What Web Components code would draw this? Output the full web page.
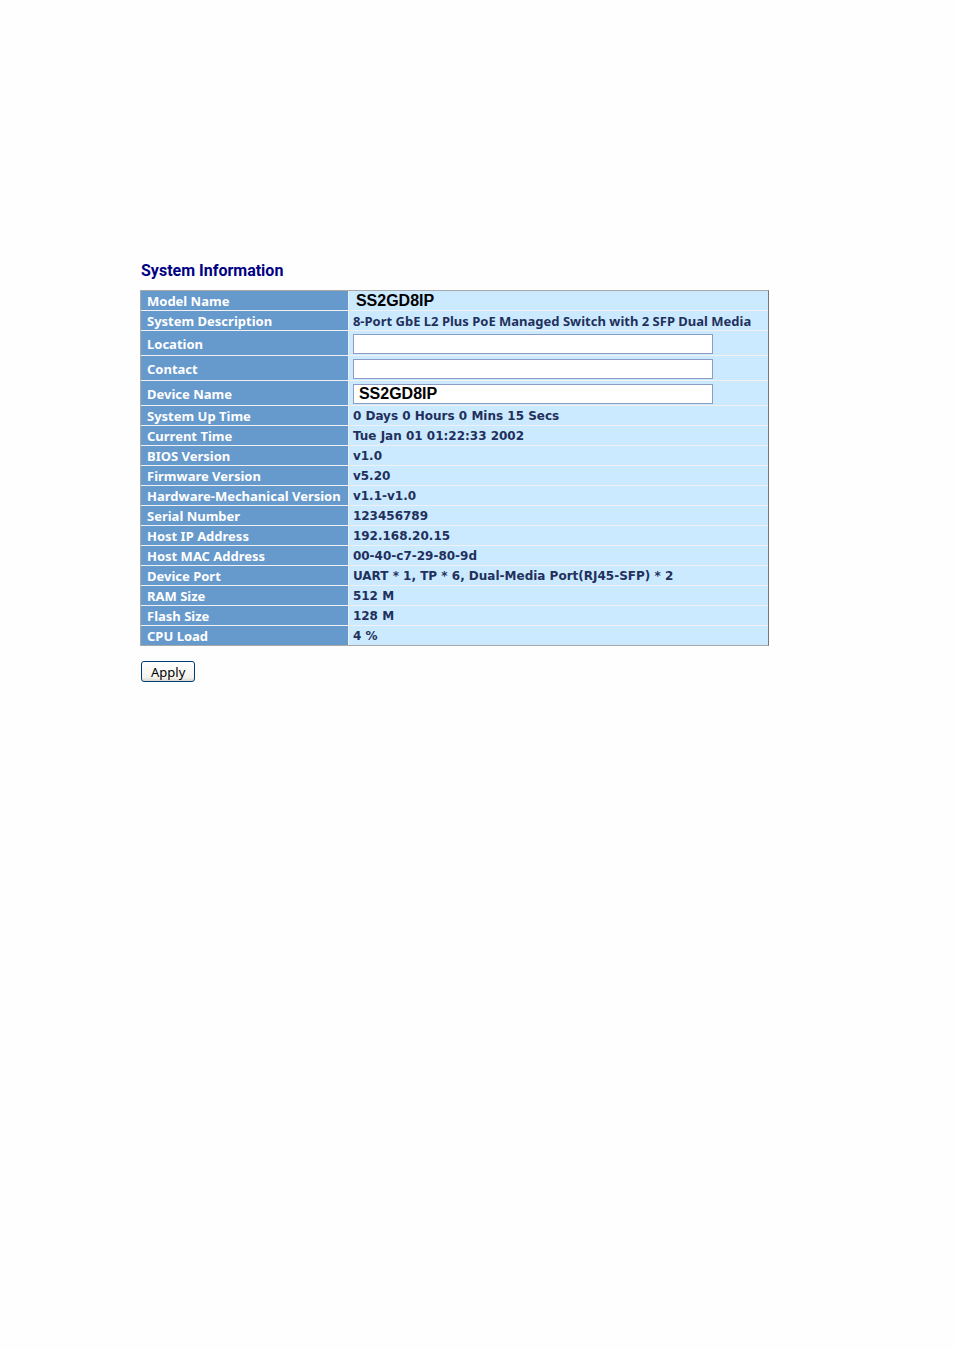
<!DOCTYPE html>
<html lang="en">
<head>
<meta charset="utf-8">
<meta name="viewport" content="width=device-width, initial-scale=1">
<title>System Information</title>
<style>
    body {
        margin: 0;
        background: #fefefe;
        color: #22305c;
        font-family: "DejaVu Sans", Verdana, sans-serif;
        font-size: 12px;
    }
</style>
</head>
<body>
<system-page>
    <span slot="title">System Information</span>
    <system-table></system-table>
    <apply-button slot="actions">Apply</apply-button>
</system-page>

<script>
class SystemPage extends HTMLElement {
    connectedCallback() {
        this.attachShadow({ mode: 'open' });
        this.shadowRoot.innerHTML = `
            <style>
                :host {
                    display: block;
                    padding: 261px 16px 40px 140px;
                }
                main {
                    display: flex;
                    flex-direction: column;
                    max-width: 629px;
                }
                h1 {
                    margin: 0 0 9px 1px;
                    color: #000084;
                    font: bold 16px/20px Roboto, Arial, sans-serif;
                }
                .actions {
                    margin: 15px 0 0 1px;
                }
            </style>
            <main>
                <h1><slot name="title"></slot></h1>
                <slot></slot>
                <div class="actions"><slot name="actions"></slot></div>
            </main>
        `;
    }
}

class SystemTable extends HTMLElement {
    connectedCallback() {
        const rows = [
            { label: 'Model Name', value: 'SS2GD8IP', style: 'model' },
            { label: 'System Description', value: '8-Port GbE L2 Plus PoE Managed Switch with 2 SFP Dual Media', style: 'long' },
            { label: 'Location', value: '', field: 'location' },
            { label: 'Contact', value: '', field: 'contact' },
            { label: 'Device Name', value: 'SS2GD8IP', field: 'device-name' },
            { label: 'System Up Time', value: '0 Days 0 Hours 0 Mins 15 Secs' },
            { label: 'Current Time', value: 'Tue Jan 01 01:22:33 2002' },
            { label: 'BIOS Version', value: 'v1.0' },
            { label: 'Firmware Version', value: 'v5.20' },
            { label: 'Hardware-Mechanical Version', value: 'v1.1-v1.0' },
            { label: 'Serial Number', value: '123456789' },
            { label: 'Host IP Address', value: '192.168.20.15' },
            { label: 'Host MAC Address', value: '00-40-c7-29-80-9d' },
            { label: 'Device Port', value: 'UART * 1, TP * 6, Dual-Media Port(RJ45-SFP) * 2' },
            { label: 'RAM Size', value: '512 M' },
            { label: 'Flash Size', value: '128 M' },
            { label: 'CPU Load', value: '4 %' }
        ];

        this.attachShadow({ mode: 'open' });
        this.shadowRoot.innerHTML = `
            <style>
                :host {
                    display: block;
                }
                table {
                    width: 100%;
                    box-sizing: border-box;
                    border: 1px solid #a8a8a8;
                    border-right-color: #777777;
                    border-spacing: 0;
                    font-size: inherit;
                    font-weight: bold;
                }
                th, td {
                    box-sizing: border-box;
                    height: 20px;
                    padding: 1px 6px 0;
                    border-bottom: 1px solid #f0f0f0;
                    line-height: 18px;
                    text-align: left;
                    white-space: nowrap;
                }
                tr:last-child > * {
                    height: 19px;
                    border-bottom: 0;
                }
                th {
                    width: 33%;
                    background: #6699cc;
                    color: #ffffff;
                    font-family: "Noto Sans", Verdana, sans-serif;
                    font-size: 13px;
                }
                td {
                    background: #cceaff;
                    border-left: 1px solid #f0f0f0;
                    padding-left: 4px;
                }
                .tall > * {
                    height: 25px;
                }
                .long {
                    font-family: "Noto Sans", Verdana, sans-serif;
                    font-size: 13px;
                }
                .model {
                    padding-left: 7px;
                }
                .model, input {
                    color: #000000;
                    font: bold 16px/18px "Liberation Sans", Arial, sans-serif;
                }
                input {
                    display: block;
                    box-sizing: border-box;
                    width: 88%;
                    height: 20px;
                    margin: 0;
                    padding: 0 5px;
                    border: 1px solid #8c9cc4;
                    border-radius: 0;
                    background: #ffffff;
                }
            </style>
            <table>
                <tbody>
                    ${rows.map(row => this.renderRow(row)).join('')}
                </tbody>
            </table>
        `;
    }

    renderRow({ label, value, field, style }) {
        if (field) {
            return `<tr class="tall">
                <th scope="row"><label for="${field}">${label}</label></th>
                <td><input type="text" id="${field}" name="${field}" value="${value}"></td>
            </tr>`;
        }
        return `<tr><th scope="row">${label}</th><td${style ? ` class="${style}"` : ''}>${value}</td></tr>`;
    }
}

class ApplyButton extends HTMLElement {
    connectedCallback() {
        this.attachShadow({ mode: 'open' });
        this.shadowRoot.innerHTML = `
            <style>
                :host {
                    display: inline-block;
                    vertical-align: top;
                }
                button {
                    display: block;
                    height: 21px;
                    margin: 0;
                    padding: 0 9px;
                    border: 1px solid #003c74;
                    border-radius: 3px;
                    background: linear-gradient(#ffffff, #f4f3ee 80%, #dcd8cc);
                    color: #000000;
                    font: 13px/18px "Noto Sans", Tahoma, sans-serif;
                }
            </style>
            <button type="button"><slot></slot></button>
        `;
    }
}

customElements.define('system-page', SystemPage);
customElements.define('system-table', SystemTable);
customElements.define('apply-button', ApplyButton);
</script>
</body>
</html>
